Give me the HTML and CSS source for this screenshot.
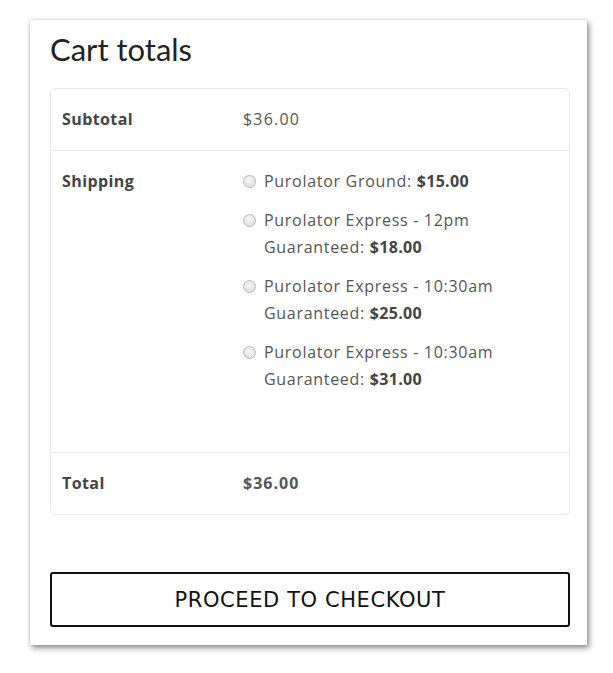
FILE: index.html
```html
<!DOCTYPE html>
<html lang="en">
<head>
<meta charset="utf-8">
<title>Cart totals</title>
<link rel="stylesheet" href="styles.css">
</head>
<body>
<div class="card">
  <h2 class="title">Cart totals</h2>
  <div class="totals">
    <div class="row">
      <div class="label">Subtotal</div>
      <div class="value">$36.00</div>
    </div>
    <div class="row row-shipping">
      <div class="label">Shipping</div>
      <ul class="methods">
        <li class="method"><span class="radio"></span><span class="line">Purolator Ground: <b>$15.00</b></span></li>
        <li class="method"><span class="radio"></span><span class="line">Purolator Express - 12pm</span><span class="line">Guaranteed: <b>$18.00</b></span></li>
        <li class="method"><span class="radio"></span><span class="line">Purolator Express - 10:30am</span><span class="line">Guaranteed: <b>$25.00</b></span></li>
        <li class="method"><span class="radio"></span><span class="line">Purolator Express - 10:30am</span><span class="line">Guaranteed: <b>$31.00</b></span></li>
      </ul>
    </div>
    <div class="row row-last">
      <div class="label">Total</div>
      <div class="value strong">$36.00</div>
    </div>
  </div>
  <button class="checkout" type="button">PROCEED TO CHECKOUT</button>
</div>
</body>
</html>
```

FILE: styles.css
```css
* { box-sizing: border-box; }
html, body { margin: 0; padding: 0; background: #fff; }
body {
  font-family: "Open Sans", "Liberation Sans", sans-serif;
  color: #555;
  padding: 20px 0 0 30px;
  min-height: 673px;
}
.card {
  width: 557px;
  height: 625px;
  background: #fff;
  box-shadow: 2px 3px 6px rgba(0,0,0,0.45), 0 0 3px rgba(0,0,0,0.15);
  padding: 0 17px 0 20px;
  display: flex;
  flex-direction: column;
}
.title {
  margin: 0;
  padding-top: 9px;
  height: 68px;
  font-family: "Lato", "Open Sans", sans-serif;
  font-size: 31px;
  line-height: 40px;
  font-weight: 400;
  color: #222;
}
.totals {
  border: 1px solid #e8e8e8;
  border-radius: 5px;
}
.row {
  display: flex;
  border-bottom: 1px solid #e8e8e8;
  font-size: 16px;
  line-height: 27px;
  padding: 17px 0 17px 11px;
}
.row-last { border-bottom: 0; }
.label {
  width: 181px;
  flex: none;
  font-weight: 700;
  color: #444;
  letter-spacing: 0.4px;
}
.value { color: #555; letter-spacing: 1.2px; }
.value.strong { font-weight: 700; letter-spacing: 1px; }
.methods {
  list-style: none;
  margin: 0 0 42px 0;
  padding: 0;
  width: 278px;
}
.method {
  position: relative;
  padding-left: 21px;
  margin-bottom: 12px;
  color: #555;
  letter-spacing: 0.7px;
}
.method:last-child { margin-bottom: 0; }
.line { display: block; white-space: nowrap; }
.method b { font-weight: 700; color: #444; letter-spacing: 0.3px; }
.radio {
  position: absolute;
  left: 0;
  top: 7px;
  width: 13px;
  height: 13px;
  border-radius: 50%;
  border: 1px solid #b8b8b8;
  background: radial-gradient(circle at 50% 35%, #f6f6f6 0%, #dadada 100%);
}
.checkout {
  margin-top: 57px;
  height: 55px;
  width: 100%;
  background: #fff;
  border: 2px solid #111;
  border-radius: 3px;
  font-family: "DejaVu Sans", "Open Sans", sans-serif;
  font-size: 21px;
  color: #111;
  letter-spacing: 0.6px;
  cursor: pointer;
}
```
